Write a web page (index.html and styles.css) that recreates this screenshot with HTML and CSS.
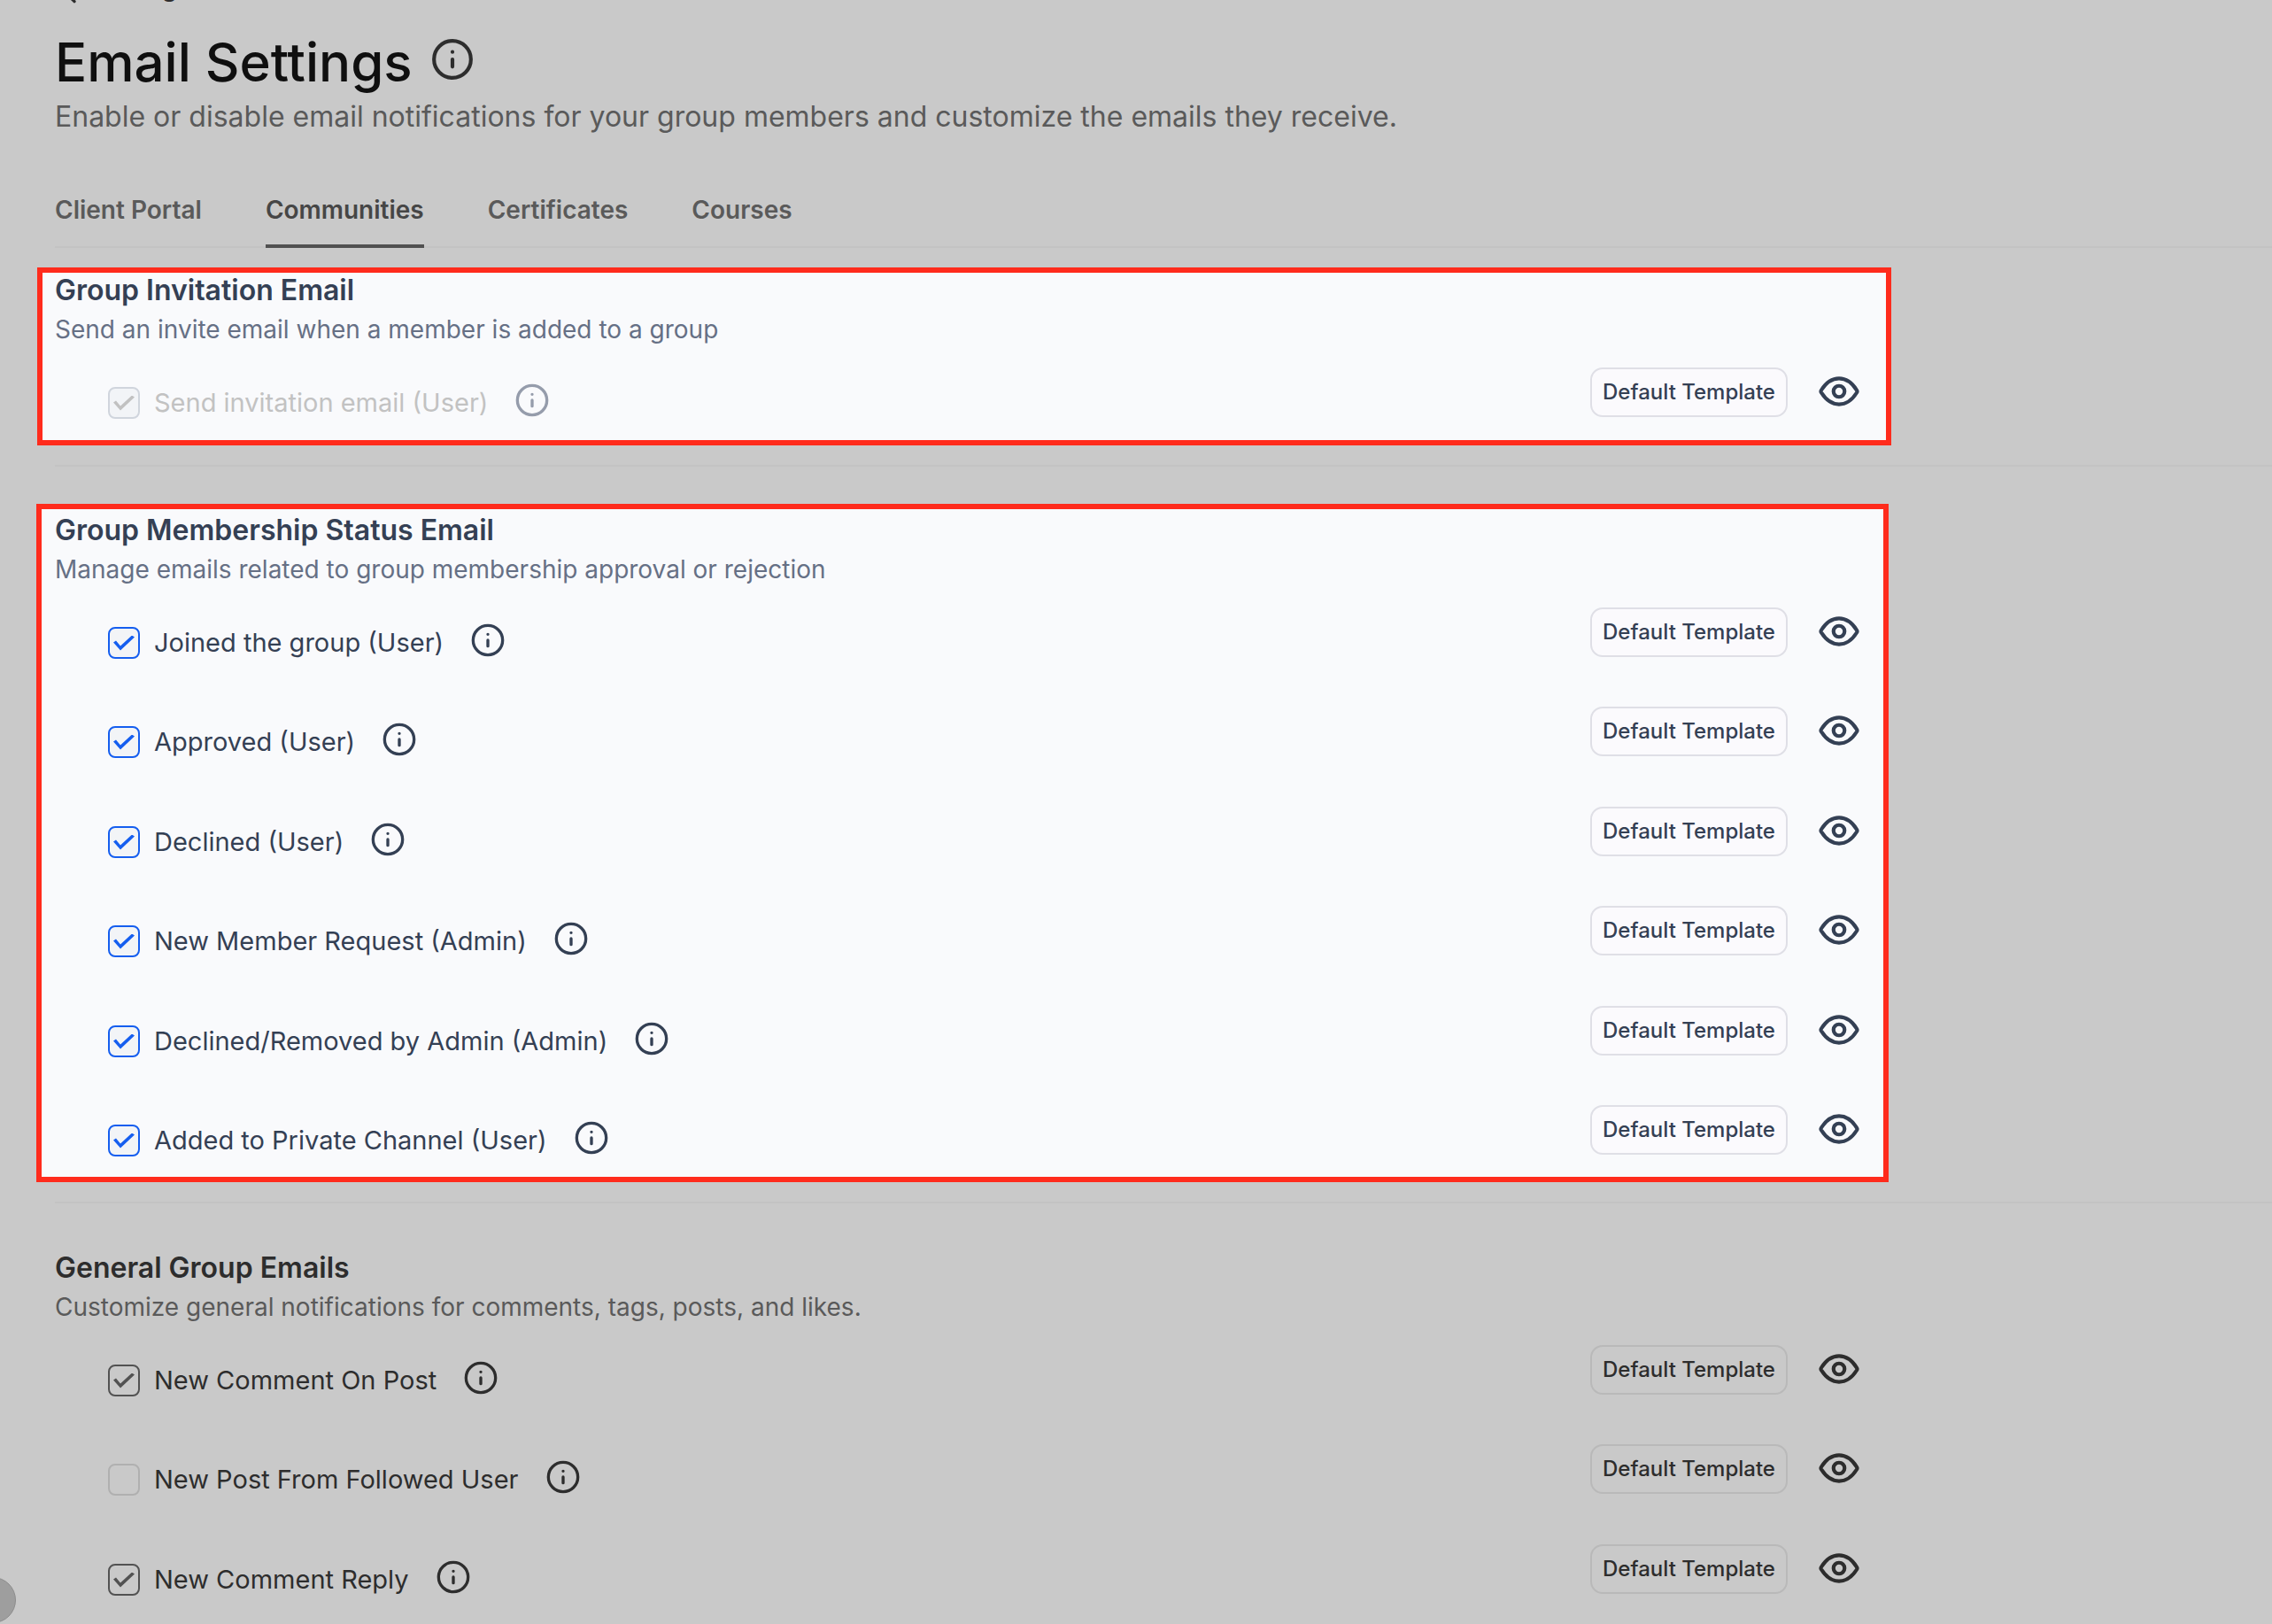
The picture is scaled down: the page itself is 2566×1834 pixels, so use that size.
FILE: index.html
```html
<!DOCTYPE html>
<html lang="en">
<head>
<meta charset="utf-8">
<meta name="viewport" content="width=device-width, initial-scale=1">
<title>Email Settings</title>
<link rel="stylesheet" href="styles.css">
</head>
<body>
<svg width="0" height="0" class="sprite" aria-hidden="true">
  <symbol id="info" viewBox="0 0 24 24">
    <g fill="none" stroke="currentColor" stroke-width="2" stroke-linecap="round" stroke-linejoin="round"><circle cx="12" cy="12" r="10"/><path d="M12 16v-4M12 8h.01"/></g>
  </symbol>
  <symbol id="eye" viewBox="0 0 24 24">
    <g fill="none" stroke="currentColor" stroke-width="2" stroke-linecap="round" stroke-linejoin="round"><path d="M2.42 12.713c-.136-.215-.204-.323-.242-.49a1.173 1.173 0 0 1 0-.446c.038-.167.106-.274.242-.49C3.546 9.505 6.895 5 12 5s8.455 4.505 9.58 6.287c.137.215.205.323.243.49.029.125.029.322 0 .446-.038.167-.106.274-.242.49C20.455 14.495 17.105 19 12 19c-5.106 0-8.455-4.505-9.58-6.287Z"/><circle cx="12" cy="12" r="3"/></g>
  </symbol>
  <symbol id="arrow-left" viewBox="0 0 24 24">
    <path d="M19 12H5M12 19l-7-7 7-7" fill="none" stroke="currentColor" stroke-width="2" stroke-linecap="round" stroke-linejoin="round"/>
  </symbol>
</svg>
<main class="page">
  <a class="back" href="#settings"><svg aria-hidden="true"><use href="#arrow-left"/></svg>Settings</a>
  <header class="header">
    <div class="title-row">
      <h1>Email Settings</h1>
      <svg class="title-info" role="img" aria-label="About email settings"><use href="#info"/></svg>
    </div>
    <p class="subtitle">Enable or disable email notifications for your group members and customize the emails they receive.</p>
  </header>
  <nav class="tabs">
    <a href="#portal">Client Portal</a>
    <a href="#communities" class="active" aria-current="page">Communities</a>
    <a href="#certificates">Certificates</a>
    <a href="#courses">Courses</a>
  </nav>

  <section class="group highlight invitation">
    <h2>Group Invitation Email</h2>
    <p class="desc">Send an invite email when a member is added to a group</p>
    <ul class="rows">
      <li class="row disabled"><label><input type="checkbox" checked disabled>Send invitation email (User)</label><svg class="info"><use href="#info"/></svg><button class="template" type="button">Default Template</button><button class="preview" type="button" aria-label="Preview"><svg><use href="#eye"/></svg></button></li>
    </ul>
  </section>
  <hr>
  <section class="group highlight membership">
    <h2>Group Membership Status Email</h2>
    <p class="desc">Manage emails related to group membership approval or rejection</p>
    <ul class="rows">
      <li class="row"><label><input type="checkbox" checked>Joined the group (User)</label><svg class="info"><use href="#info"/></svg><button class="template" type="button">Default Template</button><button class="preview" type="button" aria-label="Preview"><svg><use href="#eye"/></svg></button></li>
      <li class="row"><label><input type="checkbox" checked>Approved (User)</label><svg class="info"><use href="#info"/></svg><button class="template" type="button">Default Template</button><button class="preview" type="button" aria-label="Preview"><svg><use href="#eye"/></svg></button></li>
      <li class="row"><label><input type="checkbox" checked>Declined (User)</label><svg class="info"><use href="#info"/></svg><button class="template" type="button">Default Template</button><button class="preview" type="button" aria-label="Preview"><svg><use href="#eye"/></svg></button></li>
      <li class="row"><label><input type="checkbox" checked>New Member Request (Admin)</label><svg class="info"><use href="#info"/></svg><button class="template" type="button">Default Template</button><button class="preview" type="button" aria-label="Preview"><svg><use href="#eye"/></svg></button></li>
      <li class="row"><label><input type="checkbox" checked>Declined/Removed by Admin (Admin)</label><svg class="info"><use href="#info"/></svg><button class="template" type="button">Default Template</button><button class="preview" type="button" aria-label="Preview"><svg><use href="#eye"/></svg></button></li>
      <li class="row"><label><input type="checkbox" checked>Added to Private Channel (User)</label><svg class="info"><use href="#info"/></svg><button class="template" type="button">Default Template</button><button class="preview" type="button" aria-label="Preview"><svg><use href="#eye"/></svg></button></li>
    </ul>
  </section>
  <hr>
  <section class="group general">
    <h2>General Group Emails</h2>
    <p class="desc">Customize general notifications for comments, tags, posts, and likes.</p>
    <ul class="rows">
      <li class="row"><label><input type="checkbox" checked>New Comment On Post</label><svg class="info"><use href="#info"/></svg><button class="template" type="button">Default Template</button><button class="preview" type="button" aria-label="Preview"><svg><use href="#eye"/></svg></button></li>
      <li class="row"><label><input type="checkbox">New Post From Followed User</label><svg class="info"><use href="#info"/></svg><button class="template" type="button">Default Template</button><button class="preview" type="button" aria-label="Preview"><svg><use href="#eye"/></svg></button></li>
      <li class="row"><label><input type="checkbox" checked>New Comment Reply</label><svg class="info"><use href="#info"/></svg><button class="template" type="button">Default Template</button><button class="preview" type="button" aria-label="Preview"><svg><use href="#eye"/></svg></button></li>
    </ul>
  </section>
</main>
<button class="drawer-handle" type="button" aria-label="Open sidebar"></button>
</body>
</html>
```
FILE: styles.css
```css
:root {
  --text: #2d2d2d;
  --muted: #5a5a5a;
  --line: #c3c3c3;
  --button-bg: transparent;
  --button-line: #b9b9b9;
  --box-bg: transparent;
  --box-line: #b0b0b0;
  --check: #525252;
}
* { box-sizing: border-box; }
body {
  margin: 0;
  background: #c9c9c9;
  color: var(--text);
  font-family: Inter, "Liberation Sans", sans-serif;
  overflow: hidden;
}
.sprite { position: absolute; }
h1, h2, p, ul { margin: 0; padding: 0; }
.page { display: flow-root; }
/* Back link, scrolled almost out of view */
.back {
  display: flex;
  align-items: center;
  gap: 2px;
  height: 34px;
  margin: -31px 0 29px 64px;
  color: var(--text);
  font-size: 28px;
  line-height: 34px;
  font-weight: 500;
  text-decoration: none;
}
.back svg { width: 40px; height: 40px; margin-top: 8px; }
.header { padding-left: 62px; }
.title-row { display: flex; align-items: center; gap: 20px; height: 76px; }
h1 { font-size: 60px; line-height: 76px; font-weight: 500; color: #0f0f0f; }
.title-info { width: 50px; height: 50px; margin-bottom: 6px; }
.subtitle { font-size: 32px; line-height: 48px; color: var(--muted); }
.tabs {
  display: flex;
  gap: 72px;
  margin: 56px 0 22px 62px;
  height: 68px;
  box-shadow: inset 0 -2px var(--line);
}
.tabs a {
  color: var(--muted);
  font-size: 28px;
  line-height: 50px;
  font-weight: 600;
  text-decoration: none;
}
.tabs .active { color: #464646; border-bottom: 4px solid #505050; }

.highlight {
  --text: #344054;
  --muted: #667085;
  --button-bg: #fbfafd;
  --button-line: #dfdfe6;
  --box-bg: #f2f4f7;
  --box-line: #155eef;
  --check: #155eef;
  border: 6px solid #ff2b1c;
  background: #f9fafc;
  color: var(--text);
}
.invitation { margin: 0 430px 0 42px; padding: 0 30px 26px 14px; }
.membership { margin: 0 433px 0 41px; padding: 4px 27px 25px 15px; }
.general { margin: 0 466px 0 62px; padding-top: 53px; }
h2 { font-size: 32px; line-height: 40px; font-weight: 600; }
.desc { font-size: 28px; line-height: 44px; color: var(--muted); margin-top: 2px; }
hr { border: 0; height: 2px; background: var(--line); margin: 22px 0 42px 62px; }
.membership + hr { margin-bottom: 0; }

.rows { list-style: none; padding: 21px 0 0 60px; }
.row { display: flex; align-items: flex-start; height: 112px; }
.row:nth-child(even) { height: 113px; }
.highlight .row:last-child { height: 56px; }
.row label {
  display: flex;
  align-items: center;
  gap: 16px;
  margin-top: 21px;
  font-size: 29px;
  line-height: 38px;
}
.row input {
  appearance: none;
  width: 36px;
  height: 36px;
  margin: 0;
  border: 2px solid var(--box-line);
  border-radius: 8px;
  background: var(--box-bg);
  display: grid;
  place-content: center;
}
.row input:checked { border-color: var(--check); }
.row input:checked::before {
  content: "";
  width: 24px;
  height: 17px;
  background: var(--check);
  clip-path: polygon(0 8px, 3px 6px, 8px 12px, 21px 0, 24px 2px, 8px 17px);
}
.info { width: 40px; height: 40px; margin: 17px 0 0 30px; }
.disabled { --check: #c1c1c1; }
.disabled label { color: #c2c2c2; }
.row.disabled input:checked { border-color: #d0d5dd; }
.disabled .info { color: #959cab; }
.template {
  width: 223px;
  height: 56px;
  margin-left: auto;
  padding: 0;
  border: 2px solid var(--button-line);
  border-radius: 14px;
  background: var(--button-bg);
  color: inherit;
  font: 500 24px/32px Inter, "Liberation Sans", sans-serif;
}
.preview { margin: 2px -2px 0 33px; padding: 0; border: 0; background: none; color: inherit; }
.preview svg { display: block; width: 50px; height: 50px; }
.drawer-handle {
  position: fixed;
  left: -34px;
  bottom: 1px;
  width: 52px;
  height: 52px;
  border: 1px solid #8c8c8c;
  border-radius: 50%;
  background: #9e9e9e;
}
```
